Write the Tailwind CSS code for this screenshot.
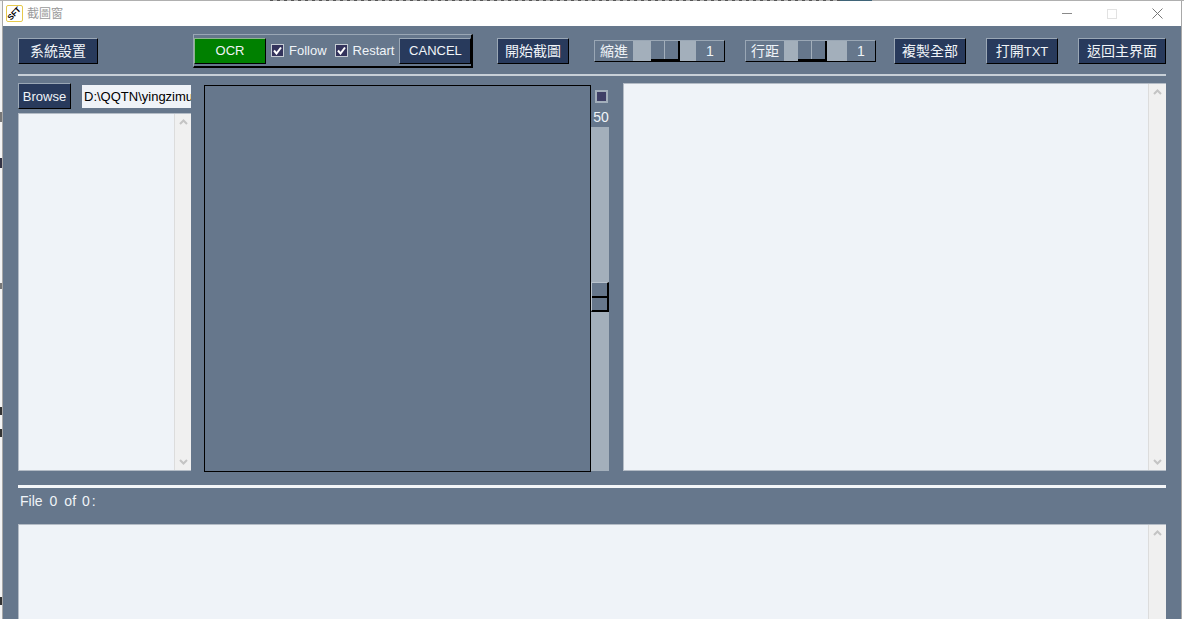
<!DOCTYPE html>
<html lang="en">
<head>
    <meta charset="UTF-8">
    <meta name="viewport" content="width=device-width, initial-scale=1">
    <title>截圖窗</title>
    <script src="https://cdn.jsdelivr.net/npm/@tailwindcss/browser@4"></script>
</head>
<body class="bg-white h-[619px] overflow-hidden flex flex-col font-['Liberation_Sans','Noto_Sans_CJK_TC',sans-serif] text-[13px] text-[#f0f4f8]">

    <!-- desktop showing above the window -->
    <div class="h-px flex shrink-0 bg-[#b0b0b0]">
        <div class="ml-[270px] w-[570px] bg-[repeating-linear-gradient(90deg,#555_0,#555_3px,#b0b0b0_3px,#b0b0b0_7px)]"></div>
        <div class="w-[32px] bg-[#3f6478]"></div>
    </div>

    <div class="flex-1 flex min-h-0">
        <!-- desktop showing left of the window -->
        <div class="w-[2px] bg-[#f4f4f4] shrink-0 flex flex-col">
            <div class="mt-[111px] h-[10px] bg-[#777]"></div>
            <div class="mt-[36px] h-[10px] bg-[#334]"></div>
            <div class="mt-[115px] h-[6px] bg-[#777]"></div>
            <div class="mt-[118px] h-[8px] bg-[#333]"></div>
            <div class="mt-[14px] h-[8px] bg-[#333]"></div>
            <div class="mt-[160px] h-[8px] bg-[#333]"></div>
        </div>

        <div class="w-[1180px] border-l border-r border-[#a8a8a8] flex flex-col shrink-0">

            <!-- title bar -->
            <div class="h-[25px] bg-white flex items-center shrink-0">
                <div class="ml-[3px] w-[17px] h-[17px] border border-[#e6c94c] rounded-[2px] flex items-center justify-center overflow-hidden">
                    <span class="-rotate-45 text-[8px] leading-none font-bold text-black">SFT</span>
                </div>
                <span class="ml-[4px] text-[12px] text-[#9a9a9a]">截圖窗</span>
                <div class="ml-auto flex items-center">
                    <div class="w-[10px] h-px bg-[#8a8a8a]"></div>
                    <div class="ml-[35px] w-[10px] h-[10px] border border-[#e2e2e2]"></div>
                    <svg class="ml-[35px] mr-[18px] w-[11px] h-[11px]" viewBox="0 0 11 11"><path d="M0.5 0.5 L10.5 10.5 M10.5 0.5 L0.5 10.5" stroke="#777" fill="none"/></svg>
                </div>
            </div>

            <!-- window body -->
            <div class="flex-1 bg-[#66778c] px-[15px] flex flex-col min-h-0">

                <!-- toolbar -->
                <div class="h-[48px] pt-[2px] flex items-center shrink-0">
                    <button class="w-[80px] h-[26px] shrink-0 text-[14px] bg-[#283a5c] border border-[#9aa7b5] border-r-black border-b-black">系統設置</button>

                    <div class="ml-[95px] w-[280px] h-[34px] shrink-0 border border-[#9aa7b5] border-r-2 border-b-2 border-r-black border-b-black flex items-center">
                        <button class="w-[72px] h-[26px] pt-px shrink-0 bg-[#008000] border border-[#8fb48f] border-r-black border-b-black">OCR</button>
                        <span class="ml-[5px] w-[13px] h-[13px] shrink-0 bg-[#33335c] border border-[#c5ccd4] flex items-center justify-center">
                            <svg class="w-[9px] h-[9px]" viewBox="0 0 9 9"><path d="M1 4.5 L3.5 7.5 L8 1.5" stroke="#fff" stroke-width="2" fill="none"/></svg>
                        </span>
                        <span class="ml-[5px] pt-px">Follow</span>
                        <span class="ml-[8px] w-[13px] h-[13px] shrink-0 bg-[#33335c] border border-[#c5ccd4] flex items-center justify-center">
                            <svg class="w-[9px] h-[9px]" viewBox="0 0 9 9"><path d="M1 4.5 L3.5 7.5 L8 1.5" stroke="#fff" stroke-width="2" fill="none"/></svg>
                        </span>
                        <span class="ml-[5px] pt-px">Restart</span>
                        <button class="ml-[5px] w-[72px] h-[26px] pt-px shrink-0 bg-[#283a5c] border border-[#9aa7b5] border-r-black border-b-black">CANCEL</button>
                    </div>

                    <button class="ml-[24px] w-[72px] h-[26px] shrink-0 text-[14px] bg-[#283a5c] border border-[#9aa7b5] border-r-black border-b-black">開始截圖</button>

                    <!-- indent stepper -->
                    <div class="ml-[25px] w-[131px] h-[22px] shrink-0 text-[14px] border border-[#9aa7b5] border-r-black border-b-black flex items-stretch">
                        <span class="w-[38px] pl-[5px] leading-[20px]">縮進</span>
                        <div class="w-[63px] bg-[#a3afbb] flex">
                            <div class="ml-[18px] w-[29px] flex border-b-2 border-r-2 border-black">
                                <div class="flex-1 bg-[#66778c]"></div>
                                <div class="flex-1 bg-[#66778c] border-l border-[#a3afbb]"></div>
                            </div>
                        </div>
                        <span class="flex-1 text-center leading-[20px]">1</span>
                    </div>

                    <!-- line spacing stepper -->
                    <div class="ml-[20px] w-[131px] h-[22px] shrink-0 text-[14px] border border-[#9aa7b5] border-r-black border-b-black flex items-stretch">
                        <span class="w-[38px] pl-[5px] leading-[20px]">行距</span>
                        <div class="w-[63px] bg-[#a3afbb] flex">
                            <div class="ml-[14px] w-[29px] flex border-b-2 border-r-2 border-black">
                                <div class="flex-1 bg-[#66778c]"></div>
                                <div class="flex-1 bg-[#66778c] border-l border-[#a3afbb]"></div>
                            </div>
                        </div>
                        <span class="flex-1 text-center leading-[20px]">1</span>
                    </div>

                    <button class="ml-[18px] w-[72px] h-[26px] shrink-0 text-[14px] bg-[#283a5c] border border-[#9aa7b5] border-r-black border-b-black">複製全部</button>
                    <button class="ml-[20px] w-[72px] h-[26px] shrink-0 text-[14px] bg-[#283a5c] border border-[#9aa7b5] border-r-black border-b-black">打開<span class="text-[13px]">TXT</span></button>
                    <button class="ml-[20px] w-[88px] h-[26px] shrink-0 text-[14px] bg-[#283a5c] border border-[#9aa7b5] border-r-black border-b-black">返回主界面</button>
                </div>

                <div class="h-[2px] bg-[#c8d0d8] shrink-0"></div>

                <!-- main panels -->
                <div class="mt-[7px] h-[388px] flex shrink-0">

                    <!-- file browser -->
                    <div class="w-[173px] flex flex-col">
                        <div class="h-[26px] flex items-center">
                            <button class="w-[53px] h-[26px] pt-px shrink-0 bg-[#283a5c] border border-[#9aa7b5] border-r-black border-b-black">Browse</button>
                            <div class="ml-[11px] w-[109px] h-[23px] bg-[#eff3f8] text-black leading-[23px] pl-[2px] whitespace-nowrap">
                                <div class="overflow-hidden">D:\QQTN\yingzimu</div>
                            </div>
                        </div>
                        <div class="mt-[4px] flex-1 flex bg-[#eff3f8] border-t border-l border-b border-[#b4bcc6]">
                            <div class="flex-1"></div>
                            <div class="w-[17px] bg-[#f0f0f0] border-l border-[#dcdcdc] flex flex-col justify-between items-center py-[5px]">
                                <svg class="w-[9px] h-[6px]" viewBox="0 0 9 6"><path d="M1 5 L4.5 1.5 L8 5" stroke="#c4c4c4" stroke-width="2" fill="none"/></svg>
                                <svg class="w-[9px] h-[6px]" viewBox="0 0 9 6"><path d="M1 1 L4.5 4.5 L8 1" stroke="#c4c4c4" stroke-width="2" fill="none"/></svg>
                            </div>
                        </div>
                    </div>

                    <!-- preview + zoom slider -->
                    <div class="ml-[13px] mt-[2px] w-[387px] h-[387px] border border-black bg-[#66778c]"></div>
                    <div class="w-[18px] flex flex-col items-center text-[14px]">
                        <span class="mt-[7px] ml-[2px] w-[13px] h-[13px] bg-[#3f3f66] border-2 border-[#a3afbb]"></span>
                        <span class="mt-[6px] ml-[2px] h-[16px] leading-[16px]">50</span>
                        <div class="mt-[2px] flex-1 w-full bg-[#a3afbb] pt-[155px]">
                            <div class="w-[18px] h-[30px] flex flex-col border-t border-l border-[#b9c3cd] border-r-2 border-b-2 border-r-black border-b-black">
                                <div class="flex-1 bg-[#66778c] border-b-2 border-black"></div>
                                <div class="flex-1 bg-[#66778c]"></div>
                            </div>
                        </div>
                    </div>

                    <!-- text output -->
                    <div class="ml-[14px] flex-1 flex bg-[#eff3f8] border-t border-l border-b border-[#b4bcc6]">
                        <div class="flex-1"></div>
                        <div class="w-[18px] bg-[#f0f0f0] border-l border-[#dcdcdc] flex flex-col justify-between items-center py-[5px]">
                            <svg class="w-[9px] h-[6px]" viewBox="0 0 9 6"><path d="M1 5 L4.5 1.5 L8 5" stroke="#c4c4c4" stroke-width="2" fill="none"/></svg>
                            <svg class="w-[9px] h-[6px]" viewBox="0 0 9 6"><path d="M1 1 L4.5 4.5 L8 1" stroke="#c4c4c4" stroke-width="2" fill="none"/></svg>
                        </div>
                    </div>
                </div>

                <div class="mt-[14px] h-[3px] bg-[#f4f6f9] shrink-0"></div>

                <div class="h-[37px] -mt-px pb-[9px] pl-[2px] flex items-center gap-[7px] shrink-0 text-[14px]">
                    <span>File</span><span>0</span><span>of</span><span class="-ml-px">0</span><span class="-ml-[5px]">:</span>
                </div>

                <!-- log box -->
                <div class="flex-1 flex bg-[#eff3f8] border-t border-l border-[#b4bcc6] min-h-0">
                    <div class="flex-1"></div>
                    <div class="w-[18px] bg-[#f0f0f0] border-l border-[#dcdcdc] flex flex-col items-center py-[5px]">
                        <svg class="w-[9px] h-[6px]" viewBox="0 0 9 6"><path d="M1 5 L4.5 1.5 L8 5" stroke="#c4c4c4" stroke-width="2" fill="none"/></svg>
                    </div>
                </div>
            </div>
        </div>
    </div>
</body>
</html>
